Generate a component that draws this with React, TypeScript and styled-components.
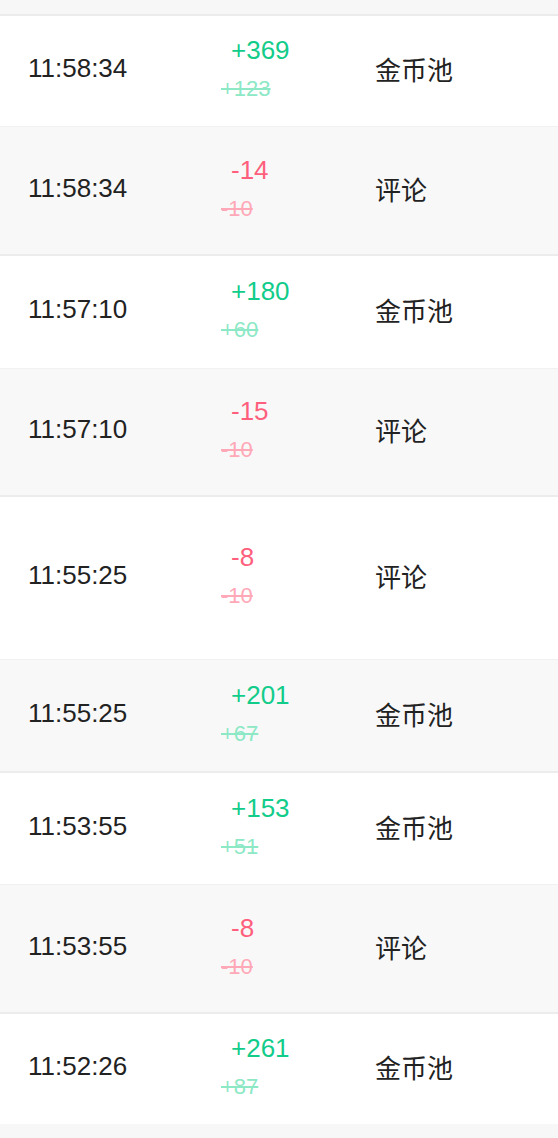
import React from 'react';
import styled, { createGlobalStyle } from 'styled-components';

const GlobalStyle = createGlobalStyle`
  body {
    margin: 0;
    background-color: #f7f7f7;
    font-family: 'Liberation Sans', 'Noto Sans CJK SC', sans-serif;
  }
`;

interface Record {
  time: string;
  amount: string;
  original: string;
  source: string;
  height: number;
}

const records: Record[] = [
  { time: '11:58:34', amount: '+369', original: '+123', source: '金币池', height: 112 },
  { time: '11:58:34', amount: '-14', original: '-10', source: '评论', height: 128 },
  { time: '11:57:10', amount: '+180', original: '+60', source: '金币池', height: 114 },
  { time: '11:57:10', amount: '-15', original: '-10', source: '评论', height: 127 },
  { time: '11:55:25', amount: '-8', original: '-10', source: '评论', height: 164 },
  { time: '11:55:25', amount: '+201', original: '+67', source: '金币池', height: 112 },
  { time: '11:53:55', amount: '+153', original: '+51', source: '金币池', height: 113 },
  { time: '11:53:55', amount: '-8', original: '-10', source: '评论', height: 128 },
  { time: '11:52:26', amount: '+261', original: '+87', source: '金币池', height: 112 },
];

const Page = styled.div`
  padding-top: 14px;
  min-height: 1138px;
  box-sizing: border-box;
  background-color: #f7f7f7;
`;

const Row = styled.div<{ $striped: boolean; $height: number }>`
  display: grid;
  grid-template-columns: 193px 154px 1fr;
  align-items: center;
  box-sizing: border-box;
  height: ${(p) => p.$height}px;
  padding-left: 28px;
  padding-bottom: 5px;
  background-color: ${(p) => (p.$striped ? '#f8f8f8' : '#ffffff')};
  border-top: ${(p) => (p.$striped ? '1px solid #f1f1f1' : '2px solid #ececec')};
`;

const Time = styled.span`
  font-size: 26px;
  color: #222222;
`;

const Amount = styled.div`
  display: flex;
  flex-direction: column;
  align-items: flex-start;
`;

const Current = styled.span<{ $gain: boolean }>`
  font-size: 26px;
  line-height: 34px;
  padding-left: 10px;
  color: ${(p) => (p.$gain ? '#12cc8a' : '#ff5f7c')};
`;

const Original = styled.span<{ $gain: boolean }>`
  font-size: 22px;
  line-height: 30px;
  margin-top: 7px;
  text-decoration: line-through;
  color: ${(p) => (p.$gain ? '#8ce8c5' : '#ffa8b7')};
`;

const Source = styled.span`
  font-size: 26px;
  color: #222222;
`;

export default function App() {
  return (
    <>
      <GlobalStyle />
      <Page>
        {records.map((r, i) => {
          const gain = r.amount.startsWith('+');
          return (
            <Row key={i} $striped={i % 2 === 1} $height={r.height}>
              <Time>{r.time}</Time>
              <Amount>
                <Current $gain={gain}>{r.amount}</Current>
                <Original $gain={gain}>{r.original}</Original>
              </Amount>
              <Source>{r.source}</Source>
            </Row>
          );
        })}
      </Page>
    </>
  );
}
